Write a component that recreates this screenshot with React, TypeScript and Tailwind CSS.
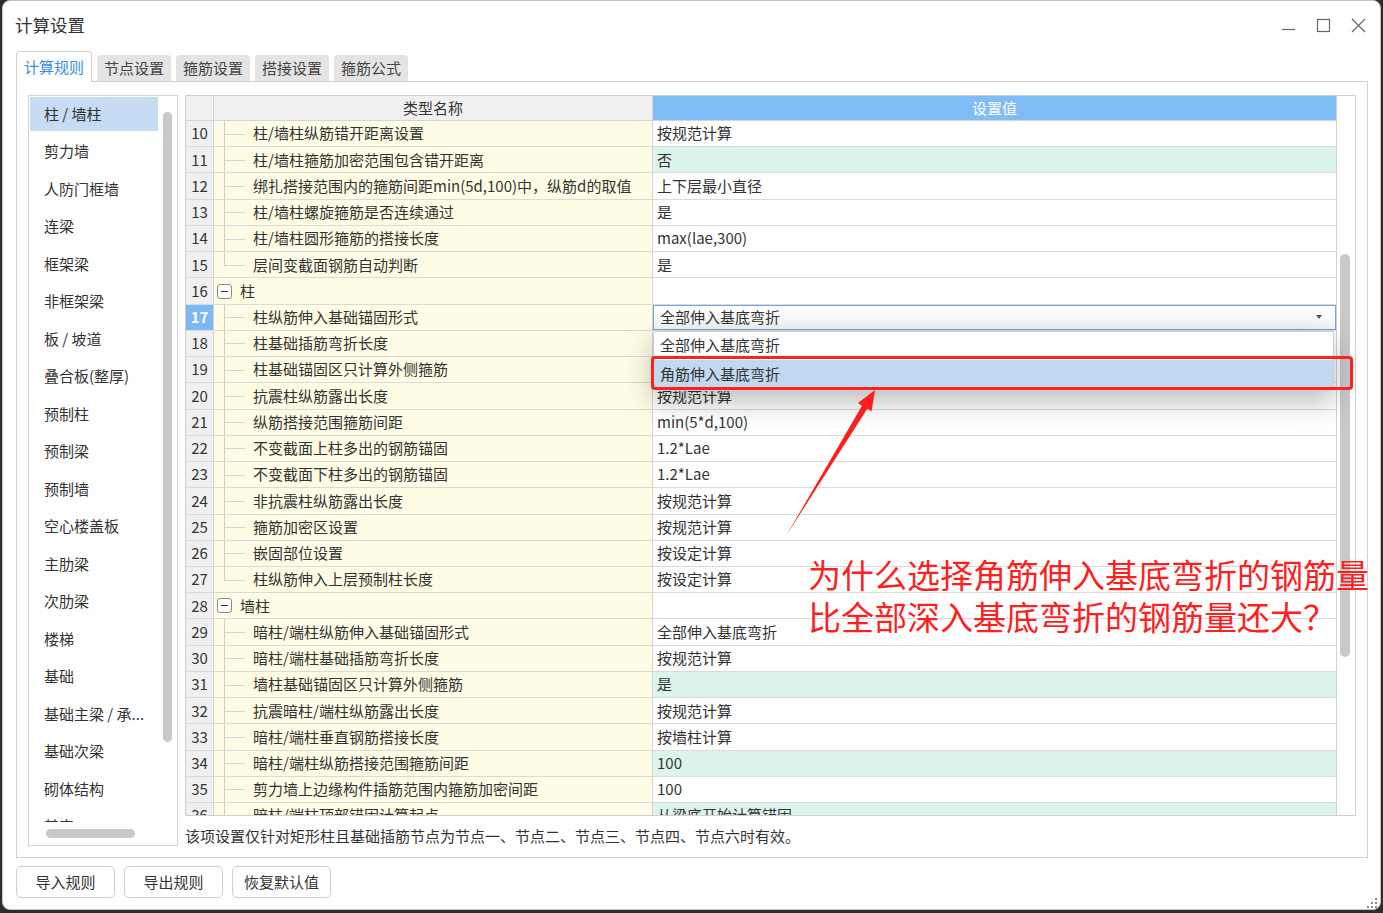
import type { ReactNode } from 'react';

interface Row {
    n: number;
    name: string;
    value?: string;
    group?: boolean;
    last?: boolean;
    green?: boolean;
    combo?: boolean;
}

const sideItems = [
    '柱 / 墙柱', '剪力墙', '人防门框墙', '连梁', '框架梁', '非框架梁', '板 / 坡道', '叠合板(整厚)',
    '预制柱', '预制梁', '预制墙', '空心楼盖板', '主肋梁', '次肋梁', '楼梯', '基础',
    '基础主梁 / 承...', '基础次梁', '砌体结构', '其它',
];

const rows: Row[] = [
    { n: 10, name: '柱/墙柱纵筋错开距离设置', value: '按规范计算' },
    { n: 11, name: '柱/墙柱箍筋加密范围包含错开距离', value: '否', green: true },
    { n: 12, name: '绑扎搭接范围内的箍筋间距min(5d,100)中，纵筋d的取值', value: '上下层最小直径' },
    { n: 13, name: '柱/墙柱螺旋箍筋是否连续通过', value: '是' },
    { n: 14, name: '柱/墙柱圆形箍筋的搭接长度', value: 'max(lae,300)' },
    { n: 15, name: '层间变截面钢筋自动判断', value: '是', last: true },
    { n: 16, name: '柱', group: true },
    { n: 17, name: '柱纵筋伸入基础锚固形式', combo: true },
    { n: 18, name: '柱基础插筋弯折长度', value: '按规范计算' },
    { n: 19, name: '柱基础锚固区只计算外侧箍筋', value: '是' },
    { n: 20, name: '抗震柱纵筋露出长度', value: '按规范计算' },
    { n: 21, name: '纵筋搭接范围箍筋间距', value: 'min(5*d,100)' },
    { n: 22, name: '不变截面上柱多出的钢筋锚固', value: '1.2*Lae' },
    { n: 23, name: '不变截面下柱多出的钢筋锚固', value: '1.2*Lae' },
    { n: 24, name: '非抗震柱纵筋露出长度', value: '按规范计算' },
    { n: 25, name: '箍筋加密区设置', value: '按规范计算' },
    { n: 26, name: '嵌固部位设置', value: '按设定计算' },
    { n: 27, name: '柱纵筋伸入上层预制柱长度', value: '按设定计算', last: true },
    { n: 28, name: '墙柱', group: true },
    { n: 29, name: '暗柱/端柱纵筋伸入基础锚固形式', value: '全部伸入基底弯折' },
    { n: 30, name: '暗柱/端柱基础插筋弯折长度', value: '按规范计算' },
    { n: 31, name: '墙柱基础锚固区只计算外侧箍筋', value: '是', green: true },
    { n: 32, name: '抗震暗柱/端柱纵筋露出长度', value: '按规范计算' },
    { n: 33, name: '暗柱/端柱垂直钢筋搭接长度', value: '按墙柱计算' },
    { n: 34, name: '暗柱/端柱纵筋搭接范围箍筋间距', value: '100', green: true },
    { n: 35, name: '剪力墙上边缘构件插筋范围内箍筋加密间距', value: '100' },
    { n: 36, name: '暗柱/端柱顶部锚固计算起点', value: '从梁底开始计算锚固', green: true },
];

const tabs = ['计算规则', '节点设置', '箍筋设置', '搭接设置', '箍筋公式'];

function Tree({ last }: { last?: boolean }) {
    return (
        <div className="relative w-[39px] h-full shrink-0">
            <div className={`absolute left-[10px] top-0 w-px bg-[#cfcfcf] ${last ? 'h-1/2' : 'h-full'}`} />
            <div className="absolute left-[10px] top-1/2 w-[21px] h-px bg-[#d6d6d6]" />
        </div>
    );
}

function NameCell({ row }: { row: Row }) {
    if (row.group) {
        return (
            <div className="flex items-center h-full pl-[3px]">
                <div className="w-[15px] h-[15px] border border-[#8a8a8a] rounded-[3px] flex items-center justify-center bg-white">
                    <div className="w-[7px] h-px bg-[#333]" />
                </div>
                <span className="ml-[8px]">{row.name}</span>
            </div>
        );
    }
    return (
        <div className="flex items-center h-full">
            <Tree last={row.last} />
            <span className="whitespace-nowrap">{row.name}</span>
        </div>
    );
}

function ComboCell() {
    return (
        <div className="relative h-full">
            <div className="h-full border border-[#6ea7e2] bg-gradient-to-b from-white to-[#f4f4f4] flex items-center pl-[6px] pr-[13px]">
                <span className="flex-1">全部伸入基底弯折</span>
                <svg width="6" height="4" viewBox="0 0 6 4"><polygon points="0,0 6,0 3,4" fill="#555" /></svg>
            </div>
            <div className="absolute left-0 right-[2px] top-[26px] z-20 bg-white border border-[#cfcfcf] rounded-b-[5px] rounded-t-[2px] shadow-[0_10px_28px_rgba(0,0,0,0.28)]">
                <div className="h-[28px] flex items-center pl-[6px]">全部伸入基底弯折</div>
                <div className="h-[30px] flex items-center pl-[6px] bg-[#c2d8ef]">角筋伸入基底弯折</div>
            </div>
        </div>
    );
}

function Button({ children, w }: { children: ReactNode; w: string }) {
    return (
        <div className={`${w} h-[32px] border border-[#cfcfcf] rounded-[5px] bg-white flex items-center justify-center text-[#333]`}>
            {children}
        </div>
    );
}

export default function App() {
    return (
        <div className="relative w-[1383px] h-[913px] bg-[#2e2e2e] overflow-hidden font-['Noto_Sans_CJK_SC','Microsoft_YaHei',sans-serif] text-[15px] text-[#333]">
            {/* window */}
            <div className="ml-[2px] w-[1379px] h-[910px] bg-white rounded-[8px] border border-[#c4c4c4] flex flex-col">
                {/* title bar */}
                <div className="h-[49px] flex items-center pl-[12px] pr-[14px] shrink-0">
                    <span className="text-[17.5px] text-[#333]">计算设置</span>
                    <div className="ml-auto flex items-center gap-[20px] text-[#555]">
                        <svg width="15" height="15" viewBox="0 0 15 15"><line x1="1" y1="11.5" x2="14" y2="11.5" stroke="#666" strokeWidth="1.2" /></svg>
                        <svg width="15" height="15" viewBox="0 0 15 15"><rect x="1.5" y="1.5" width="12" height="12" fill="none" stroke="#666" strokeWidth="1.2" /></svg>
                        <svg width="15" height="15" viewBox="0 0 15 15"><path d="M1 1 L14 14 M14 1 L1 14" stroke="#666" strokeWidth="1.2" /></svg>
                    </div>
                </div>

                {/* tabs */}
                <div className="h-[31px] flex items-end pl-[13px] gap-[5px] shrink-0">
                    {tabs.map((t, i) => i === 0 ? (
                        <div key={t} className="relative z-10 w-[76px] h-[31px] -mb-px bg-white border border-b-0 border-[#cfcfcf] rounded-t-[4px] flex items-center justify-center text-[#3b8de2]">{t}</div>
                    ) : (
                        <div key={t} className="w-[74px] h-[26px] bg-[#e4e4e4] rounded-t-[4px] flex items-center justify-center text-[#444]">{t}</div>
                    ))}
                </div>

                {/* panel */}
                <div className="ml-[13px] w-[1352px] h-[777px] border border-[#cfcfcf] flex pt-[13px] pl-[11px] shrink-0">
                    {/* side list */}
                    <div className="w-[150px] h-[751px] border border-[#d4d4d4] flex flex-col">
                        <div className="flex h-[726px] overflow-hidden pt-px pl-px">
                            <div className="w-[128px] flex flex-col">
                                {sideItems.map((s, i) => (
                                    <div key={s} className={`shrink-0 flex items-center pl-[14px] whitespace-nowrap ${i === 0 ? 'h-[34px] mb-[1.5px] bg-[#c5dcf2]' : 'h-[37.5px]'}`}>{s}</div>
                                ))}
                            </div>
                            <div className="flex-1 flex justify-center pt-[15px]">
                                <div className="w-[9px] h-[630px] rounded-full bg-[#c9c9c9]" />
                            </div>
                        </div>
                        <div className="flex-1 pl-[17px] pt-[7px]">
                            <div className="w-[89px] h-[9px] rounded-full bg-[#c9c9c9]" />
                        </div>
                    </div>

                    {/* table column */}
                    <div className="ml-[7px] w-[1171px] flex flex-col">
                        <div className="h-[721px] border border-[#cfcfcf] flex overflow-hidden">
                            <div className="flex-1 flex flex-col">
                                <div className="h-[25px] flex shrink-0 border-b border-[#d4d4d4]">
                                    <div className="w-[28px] bg-[#f0f0f0] border-r border-[#d4d4d4]" />
                                    <div className="w-[439px] bg-[#f0f0f0] border-r border-[#d4d4d4] flex items-center justify-center">类型名称</div>
                                    <div className="flex-1 bg-[#80bcf6] text-white flex items-center justify-center">设置值</div>
                                </div>
                                {rows.map((r) => (
                                    <div key={r.n} className="h-[26.24px] shrink-0 flex border-b border-[#dadada]">
                                        <div className={`w-[28px] border-r border-[#d4d4d4] flex items-center justify-center ${r.n === 17 ? 'bg-[#7cb8f4] text-white font-bold' : 'bg-[#f0f0f0]'}`}>{r.n}</div>
                                        <div className="w-[439px] bg-[#fffce6] border-r border-[#d4d4d4] overflow-hidden">
                                            <NameCell row={r} />
                                        </div>
                                        <div className={`flex-1 ${r.green ? 'bg-[#dcf5ec]' : 'bg-white'}`}>
                                            {r.combo ? <ComboCell /> : <div className="h-full flex items-center pl-[4px]">{r.value}</div>}
                                        </div>
                                    </div>
                                ))}
                            </div>
                            <div className="w-[19px] border-l border-[#d4d4d4] bg-white pl-[3px] pt-[158px]">
                                <div className="w-[10px] h-[403px] rounded-full bg-[#c9c9c9]" />
                            </div>
                        </div>
                        <div className="h-[40px] flex items-center">该项设置仅针对矩形柱且基础插筋节点为节点一、节点二、节点三、节点四、节点六时有效。</div>
                    </div>
                </div>

                {/* buttons */}
                <div className="flex gap-[9px] pl-[13px] mt-[8px]">
                    <Button w="w-[99px]">导入规则</Button>
                    <Button w="w-[99px]">导出规则</Button>
                    <Button w="w-[99px]">恢复默认值</Button>
                </div>

                {/* resize grip */}
                <div className="mt-auto self-end mr-[3px] mb-[3px]">
                    <svg width="10" height="10" viewBox="0 0 10 10" fill="#8a8a8a">
                        <rect x="8" y="0" width="2" height="2" />
                        <rect x="4" y="4" width="2" height="2" />
                        <rect x="8" y="4" width="2" height="2" />
                        <rect x="0" y="8" width="2" height="2" />
                        <rect x="4" y="8" width="2" height="2" />
                        <rect x="8" y="8" width="2" height="2" />
                    </svg>
                </div>
            </div>

            {/* annotation overlay */}
            <div className="absolute left-[651px] top-[356px] w-[702px] h-[34px] border-[3px] border-[#ff2020] rounded-[4px] z-30" />
            <svg className="absolute left-0 top-0 z-30 pointer-events-none" width="1383" height="913" viewBox="0 0 1383 913">
                <polygon points="786,536 862,405.7 857.8,403 875,390 871.6,411.3 867.3,408.7" fill="#ff1e1e" />
            </svg>
            <div className="absolute left-[808px] top-[553px] z-30 text-[#ff1f1f] text-[33px] leading-[42px] whitespace-nowrap">
                <div>为什么选择角筋伸入基底弯折的钢筋量</div>
                <div>比全部深入基底弯折的钢筋量还大？</div>
            </div>
        </div>
    );
}
